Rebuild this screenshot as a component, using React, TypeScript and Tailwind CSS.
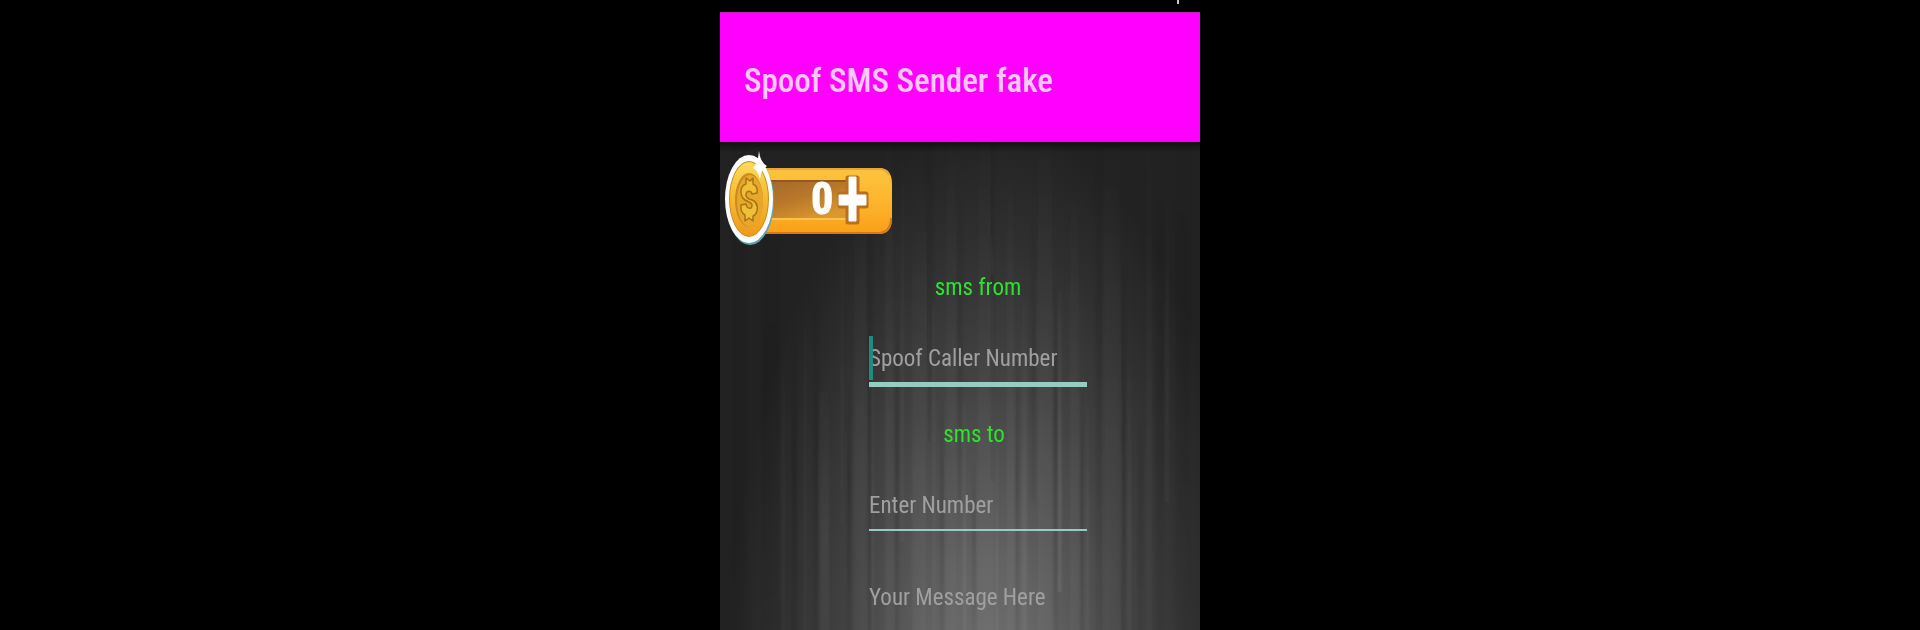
import { useState } from 'react'

// [x, y, width, height, opacity] of the streaks, on a 480 x 488 canvas
const LIGHT_STREAKS = [
  [62, 180, 3, 308, 0.03], [84, 120, 2, 368, 0.04], [100, 250, 9, 238, 0.05], [121, 0, 2, 380, 0.03],
  [134, 60, 12, 428, 0.04], [152, 200, 2, 288, 0.06], [165, 0, 8, 488, 0.04], [181, 0, 3, 400, 0.04],
  [192, 90, 14, 398, 0.04], [213, 160, 2, 328, 0.05], [226, 0, 10, 488, 0.03], [243, 260, 3, 228, 0.06],
  [258, 0, 16, 488, 0.03], [276, 300, 2, 188, 0.07], [287, 40, 7, 448, 0.04], [302, 160, 5, 328, 0.06],
  [318, 0, 14, 488, 0.04], [339, 150, 2, 300, 0.13], [350, 60, 9, 428, 0.04], [366, 260, 3, 228, 0.05],
  [384, 0, 16, 488, 0.03], [408, 220, 3, 268, 0.05], [426, 0, 6, 488, 0.03], [446, 60, 3, 300, 0.04],
]

const DARK_STREAKS = [
  [12, 0, 14, 488, 0.06], [42, 60, 18, 428, 0.08], [72, 200, 5, 288, 0.14], [93, 160, 6, 328, 0.12],
  [127, 240, 4, 248, 0.14], [147, 30, 6, 458, 0.09], [175, 170, 4, 318, 0.12], [206, 0, 7, 300, 0.08],
  [220, 260, 4, 228, 0.12], [237, 60, 6, 300, 0.08], [252, 320, 4, 168, 0.1], [270, 0, 4, 340, 0.1],
  [294, 220, 5, 268, 0.1], [311, 80, 5, 280, 0.08], [332, 140, 6, 348, 0.1], [359, 250, 4, 238, 0.1],
  [376, 0, 6, 488, 0.08], [401, 120, 5, 368, 0.12], [418, 280, 5, 208, 0.08], [436, 60, 8, 428, 0.08],
  [456, 0, 14, 488, 0.06],
]

function Backdrop() {
  return (
    <svg className="absolute inset-0 w-full h-full" viewBox="0 0 480 488" preserveAspectRatio="none" aria-hidden="true">
      <defs>
        <radialGradient id="glow" gradientUnits="userSpaceOnUse" cx="0" cy="0" r="1" gradientTransform="translate(270 560) scale(265 580)">
          <stop offset="0" stopColor="#747474" />
          <stop offset="0.25" stopColor="#626262" />
          <stop offset="0.55" stopColor="#434343" />
          <stop offset="0.8" stopColor="#2f2f2f" />
          <stop offset="1" stopColor="#222222" />
        </radialGradient>
        <linearGradient id="fade" x1="0" y1="0" x2="0" y2="1">
          <stop offset="0" stopColor="#fff" stopOpacity="0.2" />
          <stop offset="0.6" stopColor="#fff" />
          <stop offset="1" stopColor="#fff" stopOpacity="0.8" />
        </linearGradient>
        <linearGradient id="dim" x1="0" y1="0" x2="0" y2="1">
          <stop offset="0" stopColor="#000" stopOpacity="0.2" />
          <stop offset="0.4" stopColor="#000" />
          <stop offset="1" stopColor="#000" stopOpacity="0.5" />
        </linearGradient>
        <linearGradient id="shade" x1="0" y1="0" x2="0" y2="1">
          <stop offset="0" stopColor="#000" stopOpacity="0.5" />
          <stop offset="1" stopColor="#000" stopOpacity="0" />
        </linearGradient>
        <filter id="soft" x="-5%" width="110%">
          <feGaussianBlur stdDeviation="1 0" />
        </filter>
      </defs>
      <rect width="480" height="488" fill="url(#glow)" />
      <g filter="url(#soft)">
        {LIGHT_STREAKS.map(([x, y, w, h, o]) => (
          <rect key={x} x={x} y={y} width={w} height={h} fill="url(#fade)" opacity={o} />
        ))}
        {DARK_STREAKS.map(([x, y, w, h, o]) => (
          <rect key={x} x={x} y={y} width={w} height={h} fill="url(#dim)" opacity={o} />
        ))}
      </g>
      <rect width="480" height="10" fill="url(#shade)" />
    </svg>
  )
}

function CoinBadge({ coins }: { coins: number }) {
  return (
    <svg width="180" height="104" viewBox="0 0 180 104">
      <defs>
        <linearGradient id="bar" x1="0" y1="0" x2="0" y2="1">
          <stop offset="0" stopColor="#fdc43c" />
          <stop offset="0.5" stopColor="#fcb52e" />
          <stop offset="1" stopColor="#fb9f17" />
        </linearGradient>
        <linearGradient id="slot" x1="0" y1="0" x2="0.6" y2="1">
          <stop offset="0" stopColor="#a5692a" />
          <stop offset="0.5" stopColor="#b8782a" />
          <stop offset="1" stopColor="#dc982f" />
        </linearGradient>
        <linearGradient id="gold" x1="0" y1="0" x2="0" y2="1">
          <stop offset="0" stopColor="#fbdc5c" />
          <stop offset="0.5" stopColor="#f6b92c" />
          <stop offset="1" stopColor="#f09a1c" />
        </linearGradient>
      </defs>

      <path d="M40 20H159Q172 20 172 36V70Q172 86 159 86H40Z" fill="url(#bar)" />
      <path d="M40 85H159Q171 84 171 70" fill="none" stroke="#d9781a" strokeWidth="2" />
      <path d="M40 21H159Q166 21 169 27" fill="none" stroke="#e5a63a" strokeWidth="2" />
      <rect x="50" y="32" width="80" height="39" fill="url(#slot)" />
      <path d="M50 33H128" stroke="#94591f" strokeWidth="2" />
      <path d="M50 71H128" stroke="#fdc343" strokeWidth="2" />

      <ellipse cx="30" cy="53" rx="24" ry="44" fill="#5aa3c0" />
      <ellipse cx="29" cy="51" rx="24" ry="44" fill="#fff" />
      <ellipse cx="29" cy="51" rx="20" ry="38" fill="#c98a22" />
      <ellipse cx="29" cy="51" rx="19" ry="37" fill="url(#gold)" />
      <ellipse cx="29" cy="52" rx="14" ry="27" fill="#cb8a1d" />
      <ellipse cx="30" cy="53" rx="13" ry="26" fill="#e8a728" />
      <path
        d="M26 30L30 33L33 30V36Q38 38 37 45L32 46Q31 42 27 44Q24 48 29 51Q39 53 37 63Q36 67 33 68V73L29 70L25 73V67Q20 64 21 57L26 56Q27 61 31 60Q34 56 29 54Q20 51 21 42Q22 37 26 36Z"
        fill="#efc034" stroke="#a8741a" strokeWidth="1.5" strokeLinejoin="round"
      />
      <path d="M39 3Q40 14 47 18Q41 21 40 31Q38 23 33 20Q38 15 39 3Z" fill="#fff" />

      <path d="M128 30H137V46H146V58H137V74H128V58H120V46H128Z" fill="none" stroke="#b87021" strokeWidth="5" strokeLinejoin="round" />
      <path d="M129 29H136V47H146V57H136V73H129V57H119V47H129Z" fill="#fff" stroke="#fff" strokeWidth="1" strokeLinejoin="round" />
      <text x="102" y="66" textAnchor="middle" fill="#fff" stroke="#fff" strokeWidth="1" className="font-['Roboto_Condensed',Roboto,sans-serif] text-[44px] font-bold">
        {coins}
      </text>
    </svg>
  )
}

const labelClass = 'block text-center text-[23px] leading-[40px] text-[#2fe22f]'

const inputClass =
  'block w-full bg-transparent text-[23px] leading-[46px] h-[46px] text-[#e5e5e5] placeholder:text-[#a0a0a0] placeholder:opacity-100 outline-none'

export default function App() {
  const [from, setFrom] = useState('')
  const [to, setTo] = useState('')
  const [message, setMessage] = useState('')

  return (
    <div className="min-h-screen bg-black flex justify-center font-['Roboto_Condensed',Roboto,sans-serif]">
      <div className="w-full max-w-[480px] flex flex-col">
        {/* Status bar */}
        <div className="h-3 flex justify-end pr-[21px]">
          <span className="w-[2px] h-[4px] bg-[#c8c8c8]" />
        </div>

        <header className="bg-[#ff00ff] border-y border-[#c81ec8] px-6 pt-12 pb-10">
          <h1 className="text-[33px] leading-[40px] font-medium text-[#ffc8ff]">Spoof SMS Sender fake</h1>
        </header>

        <main className="relative flex-1 bg-[#202020]">
          <Backdrop />
          <div className="relative">
            <button type="button" aria-label="Add coins" className="block mt-[6px]">
              <CoinBadge coins={0} />
            </button>

            <form className="w-[218px] ml-[149px]" onSubmit={e => e.preventDefault()}>
              <label htmlFor="from" className={`${labelClass} pt-4`}>
                sms from
              </label>
              <div className="relative mt-7 border-b-[5px] border-[#93cdc4]">
                <input id="from" value={from} onChange={e => setFrom(e.target.value)} placeholder="Spoof Caller Number" className={inputClass} />
                {!from && <span className="absolute left-0 top-0 w-[4px] h-[44px] bg-[#1c8d80]" />}
              </div>

              <label htmlFor="to" className={`${labelClass} pt-7 pr-2`}>
                sms to
              </label>
              <div className="mt-7 border-b-2 border-[#93cdc4]">
                <input id="to" value={to} onChange={e => setTo(e.target.value)} placeholder="Enter Number" className={inputClass} />
              </div>

              <textarea
                aria-label="Message" rows={1} value={message} onChange={e => setMessage(e.target.value)}
                placeholder="Your Message Here" className={`${inputClass} mt-11 resize-none overflow-hidden`}
              />
            </form>
          </div>
        </main>
      </div>
    </div>
  )
}
